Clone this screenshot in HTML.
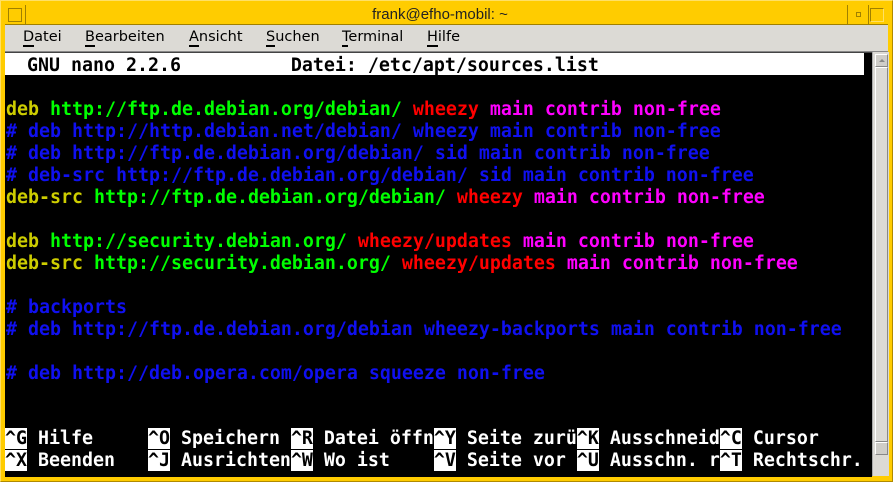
<!DOCTYPE html>
<html><head><meta charset="utf-8"><style>
*{margin:0;padding:0}
body{width:893px;height:482px;background:#ffcc00;position:relative;overflow:hidden;font-family:"DejaVu Sans","Liberation Sans",sans-serif}
.frame{position:absolute;left:0;top:0;width:891px;height:480px;border:1px solid #b08a00;border-top-color:#ffe066;border-left-color:#ffe066}
#title{position:absolute;left:5px;top:5px;width:883px;height:19px;border-bottom:1px solid #a08000}
#title span{position:absolute;left:0;width:870px;text-align:center;top:1px;font:15px "Liberation Sans",sans-serif;color:#222}
#menu{position:absolute;left:5px;top:25px;width:883px;height:26px;background:#dcdad5;border-bottom:1px solid #888}
#menu span{position:absolute;top:4px;font-size:14.5px;color:#000}
#menu u{text-decoration:none;border-bottom:2px solid #000}
#term{position:absolute;left:5px;top:52px;width:867px;height:424px;background:#000;border-top:1px solid #444}
.r{position:absolute;left:1px;height:22px;line-height:22px;white-space:pre;font:bold 18.27px "DejaVu Sans Mono","Liberation Mono",monospace;}
.y{color:#cdcd00}.g{color:#00ff00}.b{color:#1010f0}.rd{color:#ff0000}.m{color:#ff00ff}.w{color:#fff}
.k{background:#fff;color:#000}
#sb{position:absolute;left:872px;top:52px;width:16px;height:424px;background:#dcdad5;border-left:1px solid #aaa}
</style></head><body>
<div class="frame"></div>
<div id="title"><span>frank@efho-mobil: ~</span>
<div style="position:absolute;left:3px;top:3px;width:14px;height:14px;border:1px solid #a08000;box-sizing:border-box"></div>
<div style="position:absolute;left:0;top:0;width:20px;height:19px;border-right:1px solid #a08000"></div>
</div>
<div style="position:absolute;left:847px;top:5px;width:20px;height:19px;border-left:1px solid #a08000;border-right:1px solid #a08000"><div style="position:absolute;left:8px;top:7px;width:3px;height:3px;border:1px solid #a08000"></div></div>
<div style="position:absolute;left:870px;top:8px;width:12px;height:12px;border:1px solid #a08000;border-right-color:#ffe066;border-bottom-color:#ffe066"></div>
<div id="menu">
<span style="left:18px"><u>D</u>atei</span>
<span style="left:80px"><u>B</u>earbeiten</span>
<span style="left:184px"><u>A</u>nsicht</span>
<span style="left:261px"><u>S</u>uchen</span>
<span style="left:337px"><u>T</u>erminal</span>
<span style="left:422px"><u>H</u>ilfe</span>
</div>
<div id="term">
<div style="position:absolute;left:0;top:0;width:859px;height:22px;background:#fff"></div>
<div class="r" style="top:2px;color:#000;left:0">  GNU nano 2.2.6          Datei: /etc/apt/sources.list</div>
<div class="r" style="top:46px"><span class="y">deb</span> <span class="g">http://ftp.de.debian.org/debian/</span> <span class="rd">wheezy</span> <span class="m">main contrib non-free</span></div>
<div class="r b" style="top:68px"># deb http://http.debian.net/debian/ wheezy main contrib non-free</div>
<div class="r b" style="top:90px"># deb http://ftp.de.debian.org/debian/ sid main contrib non-free</div>
<div class="r b" style="top:112px"># deb-src http://ftp.de.debian.org/debian/ sid main contrib non-free</div>
<div class="r" style="top:134px"><span class="y">deb-src</span> <span class="g">http://ftp.de.debian.org/debian/</span> <span class="rd">wheezy</span> <span class="m">main contrib non-free</span></div>
<div class="r" style="top:178px"><span class="y">deb</span> <span class="g">http://security.debian.org/</span> <span class="rd">wheezy/updates</span> <span class="m">main contrib non-free</span></div>
<div class="r" style="top:200px"><span class="y">deb-src</span> <span class="g">http://security.debian.org/</span> <span class="rd">wheezy/updates</span> <span class="m">main contrib non-free</span></div>
<div class="r b" style="top:244px"># backports</div>
<div class="r b" style="top:266px"># deb http://ftp.de.debian.org/debian wheezy-backports main contrib non-free</div>
<div class="r b" style="top:310px"># deb http://deb.opera.com/opera squeeze non-free</div>
<div class="r w" style="top:375px;left:0"><span class="k">^G</span> Hilfe     <span class="k">^O</span> Speichern <span class="k">^R</span> Datei öffn<span class="k">^Y</span> Seite zurü<span class="k">^K</span> Ausschneid<span class="k">^C</span> Cursor</div>
<div class="r w" style="top:397px;left:0"><span class="k">^X</span> Beenden   <span class="k">^J</span> Ausrichten<span class="k">^W</span> Wo ist    <span class="k">^V</span> Seite vor <span class="k">^U</span> Ausschn. r<span class="k">^T</span> Rechtschr.</div>
</div>
<div id="sb">
<div style="position:absolute;left:2px;top:2px;width:11px;height:11px;background:#cfcdc8;border:1px solid #fff;border-right-color:#888;border-bottom-color:#888"></div>
<div style="position:absolute;left:6px;top:7px;width:0;height:0;border-left:3px solid transparent;border-right:3px solid transparent;border-bottom:3px solid #888"></div>
<div style="position:absolute;left:2px;top:15px;width:11px;height:373px;border:1px solid #fff;border-right-color:#888;border-bottom-color:#888"></div>
<div style="position:absolute;left:2px;top:390px;width:11px;height:11px;background:#cfcdc8;border:1px solid #fff;border-right-color:#888;border-bottom-color:#888"></div>
</div>
</body></html>
